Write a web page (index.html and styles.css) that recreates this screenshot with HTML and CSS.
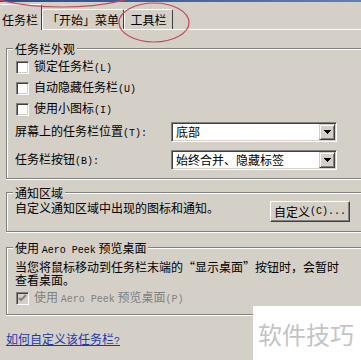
FILE: index.html
```html
<!DOCTYPE html>
<html lang="zh-CN">
<head>
<meta charset="utf-8">
<link rel="stylesheet" href="styles.css">
</head>
<body>
<div class="titlebar"></div>
<div class="tabs">
  <div class="tab sel">任务栏</div>
  <div class="tab t2">「开始」菜单</div>
  <div class="tab t3">工具栏</div>
</div>
<div class="panel">
  <div class="group g1">
    <div class="gtitle">任务栏外观</div>
    <div class="cbrow first"><span class="cb"></span><span>锁定任务栏<span class="lat">(L)</span></span></div>
    <div class="cbrow"><span class="cb"></span><span>自动隐藏任务栏<span class="lat">(U)</span></span></div>
    <div class="cbrow"><span class="cb"></span><span>使用小图标<span class="lat">(I)</span></span></div>
    <div class="selrow s1">
      <span class="sellabel">屏幕上的任务栏位置<span class="lat">(T):</span></span>
      <div class="select"><span class="val">底部</span><span class="arrow"><svg width="7" height="4" viewBox="0 0 7 4"><path d="M0 0h7v1H0zM1 1h5v1H1zM2 2h3v1H2zM3 3h1v1H3z" fill="#000"/></svg></span></div>
    </div>
    <div class="selrow s2">
      <span class="sellabel">任务栏按钮<span class="lat">(B):</span></span>
      <div class="select"><span class="val">始终合并、隐藏标签</span><span class="arrow"><svg width="7" height="4" viewBox="0 0 7 4"><path d="M0 0h7v1H0zM1 1h5v1H1zM2 2h3v1H2zM3 3h1v1H3z" fill="#000"/></svg></span></div>
    </div>
  </div>

  <div class="group g2">
    <div class="gtitle">通知区域</div>
    <div class="notrow">
      <span class="nottext">自定义通知区域中出现的图标和通知。</span>
      <button class="btn">自定义<span class="lat">(C)...</span></button>
    </div>
  </div>

  <div class="group g3">
    <div class="gtitle">使用 <span class="lat">Aero Peek</span> 预览桌面</div>
    <p class="desc">当您将鼠标移动到任务栏末端的“显示桌面”按钮时，会暂时<br>查看桌面。</p>
    <div class="cbrow disabled"><span class="cb checked"><svg width="9" height="9" viewBox="0 0 9 9"><path d="M1 4l2 2 5-5" fill="none" stroke="#808080" stroke-width="2"/></svg></span><span>使用 <span class="lat">Aero Peek</span> 预览桌面<span class="lat">(P)</span></span></div>
  </div>

  <a class="link" href="#">如何自定义该任务栏<span class="lat">?</span></a>
</div>

<div class="watermark">软件技巧</div>

<svg class="annot" width="361" height="360" viewBox="0 0 361 360">
  <ellipse cx="62" cy="-12" rx="80" ry="19" fill="none" stroke="#c9485c" stroke-width="1.2"/>
  <ellipse cx="154" cy="22.5" rx="35" ry="19.5" fill="none" stroke="#c9485c" stroke-width="1.2"/>
</svg>
</body>
</html>
```
FILE: styles.css
```css
html, body {
  margin: 0;
  padding: 0;
}
body {
  width: 361px;
  height: 360px;
  overflow: hidden;
  position: relative;
  background: #d4d0c8;
  color: #000;
  font-family: "Noto Sans CJK SC", "Noto Sans", sans-serif;
  font-size: 12px;
  line-height: 14px;
}
.lat {
  font-family: "Liberation Mono", monospace;
  font-size: 10px;
}
.titlebar {
  height: 2px;
  background: linear-gradient(90deg, #2c4a86, #5f7fb6);
}
.tabs {
  display: flex;
  align-items: flex-end;
  height: 27px;
  margin-left: -2px;
  overflow: visible;
}
.tab {
  box-sizing: border-box;
  height: 20px;
  border-top: 1px solid #fff;
  border-left: 1px solid #fff;
  border-right: 1px solid #404040;
  border-radius: 2px 2px 0 0;
  display: flex;
  align-items: center;
  justify-content: center;
  line-height: 12px;
  white-space: nowrap;
}
.tab.sel {
  position: relative;
  width: 44px;
  height: 26px;
  margin-bottom: -1px;
  padding-top: 4px;
  background: #d4d0c8;
}
.t2 { width: 82px; }
.t3 { width: 49px; }

.panel {
  border-top: 1px solid #fff;
  padding: 18px 0 0 6px;
  display: flex;
  flex-direction: column;
  align-items: flex-start;
  overflow: hidden;
  width: 361px;
  box-sizing: border-box;
  height: 330px;
}
.group {
  box-sizing: border-box;
  width: 360px;
  margin-right: -5px;
  border: 1px solid #808080;
  border-right: none;
  box-shadow: inset 1px 1px 0 #fff, 0 1px 0 #fff;
  padding: 0 0 0 8px;
  display: flex;
  flex-direction: column;
  align-items: flex-start;
  flex-shrink: 0;
}
.gtitle {
  margin-top: -7px;
  margin-left: -2px;
  padding: 0 2px;
  line-height: 13px;
  background: #d4d0c8;
  white-space: nowrap;
}
.cbrow {
  display: flex;
  align-items: center;
  height: 21px;
  white-space: nowrap;
}
.cbrow.first { margin-top: 2px; }
.cb {
  box-sizing: border-box;
  width: 13px;
  height: 13px;
  margin-left: 1px;
  margin-right: 5px;
  background: #fff;
  border: 1px solid;
  border-color: #808080 #fff #fff #808080;
  box-shadow: inset 1px 1px 0 #404040, inset -1px -1px 0 #d4d0c8;
  display: flex;
  align-items: center;
  justify-content: center;
}
.cb.checked {
  background: #d4d0c8;
}
.disabled {
  color: #808080;
  height: 20px;
  margin-top: 2px;
}
.selrow {
  display: flex;
  align-items: center;
  height: 20px;
  white-space: nowrap;
}
.s1 { margin-top: 2px; }
.s2 { margin-top: 8px; margin-bottom: 8px; }
.sellabel {
  width: 156px;
}
.select {
  box-sizing: border-box;
  width: 166px;
  height: 20px;
  background: #fff;
  border: 1px solid;
  border-color: #808080 #fff #fff #808080;
  box-shadow: inset 1px 1px 0 #404040, inset -1px -1px 0 #d4d0c8;
  display: flex;
  align-items: center;
  justify-content: space-between;
  padding: 1px;
}
.val {
  padding-left: 3px;
}
.arrow {
  box-sizing: border-box;
  width: 16px;
  height: 16px;
  background: #d4d0c8;
  border: 1px solid;
  border-color: #d4d0c8 #404040 #404040 #d4d0c8;
  box-shadow: inset 1px 1px 0 #fff, inset -1px -1px 0 #808080;
  display: flex;
  align-items: center;
  justify-content: center;
}
.arrow svg { display: block; }

.g2 {
  margin-top: 13px;
  padding-bottom: 9px;
}
.notrow {
  display: flex;
  align-items: flex-start;
  width: 335px;
  white-space: nowrap;
}
.nottext {
  margin-top: 2px;
}
.btn {
  box-sizing: border-box;
  margin: 2px 0 0 auto;
  width: 80px;
  height: 21px;
  padding: 0;
  font: inherit;
  color: #000;
  background: #d4d0c8;
  border: 1px solid;
  border-color: #fff #404040 #404040 #fff;
  box-shadow: inset -1px -1px 0 #808080;
  display: flex;
  align-items: center;
  justify-content: center;
}
.g3 {
  margin-top: 15px;
  padding-bottom: 6px;
}
.desc {
  margin: 3px 0 0;
  line-height: 13px;
  white-space: nowrap;
}
.link {
  margin-top: 17px;
  color: #1f3aa8;
  text-decoration: underline;
  white-space: nowrap;
}
.watermark {
  position: absolute;
  left: 253px;
  top: 306px;
  right: 0;
  bottom: 0;
  background: #fff;
  color: #c4c4c4;
  font-size: 24px;
  line-height: 24px;
  padding: 16px 0 0 5px;
  box-sizing: border-box;
  white-space: nowrap;
}
.annot {
  position: absolute;
  left: 0;
  top: 0;
  pointer-events: none;
}
```
